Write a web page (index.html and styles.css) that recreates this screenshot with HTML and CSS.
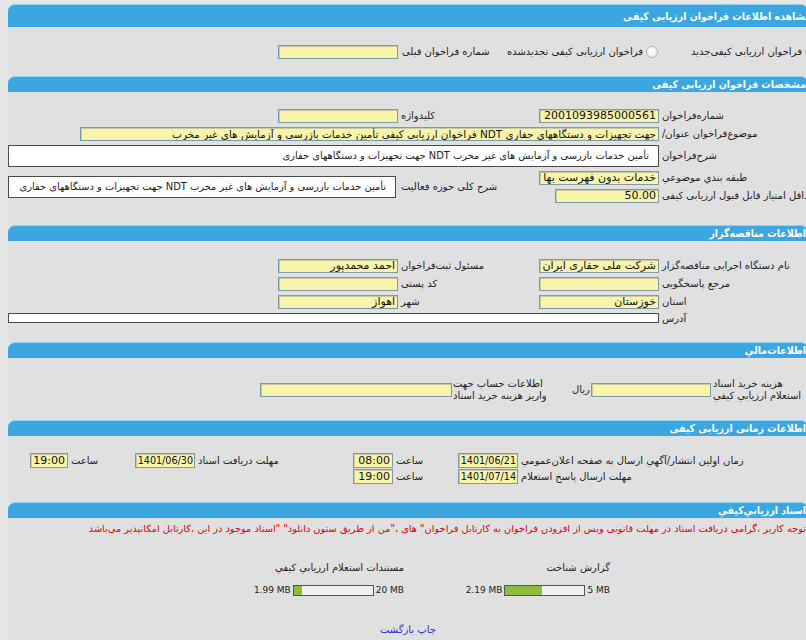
FILE: index.html
```html
<!DOCTYPE html>
<html lang="fa">
<head>
<meta charset="utf-8">
<title>مشاهده اطلاعات فراخوان ارزيابی کيفی</title>
<link rel="stylesheet" href="styles.css">
</head>
<body>
<div class="page">

  <div class="bar tall">مشاهده اطلاعات فراخوان ارزيابی کيفی</div>
  <div class="panel p1">
    <div class="row1">
      <span class="inp w120"></span>
      <span class="lbl l-prev">شماره فراخوان قبلی</span>
      <span class="rgroup g1"><span class="lbl">فراخوان ارزیابی کیفی تجدیدشده</span><span class="radio"></span></span>
      <span class="rgroup g2"><span class="lbl">فراخوان ارزیابی کیفی‌جدید</span><span class="radio"></span></span>
    </div>
  </div>

  <div class="bar">مشخصات فراخوان ارزيابی کيفی</div>
  <div class="panel p2">
    <div class="grid g-spec">
      <span class="inp c2 r1"></span>
      <span class="lbl c3 r1 pl">کلیدواژه</span>
      <span class="inp c4 r1 num">2001093985000561</span>
      <span class="lbl c5 r1 pl">شماره‌فراخوان</span>

      <span class="inp wide r2">فراخوان ارزیابی کیفی تأمین خدمات بازرسی و آزمایش های غیر مخرب NDT جهت تجهیزات و دستگاههای حفاری</span>
      <span class="lbl c5 r2 pl">موضوع‌فراخوان عنوان/</span>

      <span class="box box-full r3">تأمین خدمات بازرسی و آزمایش های غیر مخرب NDT جهت تجهیزات و دستگاههای حفاری</span>
      <span class="lbl c5 r3 pl">شرح‌فراخوان</span>

      <span class="box box-half">تأمین خدمات بازرسی و آزمایش های غیر مخرب NDT جهت تجهیزات و دستگاههای حفاری</span>
      <span class="lbl c3 r45 pl">شرح کلی حوزه فعالیت</span>
      <span class="inp c4 r4">خدمات بدون فهرست بها</span>
      <span class="lbl c5 r4 pl">طبقه بندي موضوعي</span>

      <span class="inp c4 r5 w104 num">50.00</span>
      <span class="lbl c5 r5 pl ltr">حداقل امتیاز قابل قبول ارزیابی کیفی</span>
    </div>
  </div>

  <div class="bar">اطلاعات مناقصه‌گزار</div>
  <div class="panel p3">
    <div class="grid g-org">
      <span class="inp c2 r1">احمد محمدپور</span>
      <span class="lbl c3 r1 pl">مسئول ثبت‌فراخوان</span>
      <span class="inp c4 r1">شرکت ملی حفاری ایران در</span>
      <span class="lbl c5 r1 pl">نام دستگاه اجرایی مناقصه‌گزار</span>

      <span class="inp c2 r2"></span>
      <span class="lbl c3 r2 pl">کد پستی</span>
      <span class="inp c4 r2"></span>
      <span class="lbl c5 r2 pl">مرجع پاسخگویی</span>

      <span class="inp c2 r3">اهواز</span>
      <span class="lbl c3 r3 pl">شهر</span>
      <span class="inp c4 r3">خوزستان</span>
      <span class="lbl c5 r3 pl">استان</span>

      <span class="box box-addr r4"></span>
      <span class="lbl c5 r4 pl addr">آدرس</span>
    </div>
  </div>

  <div class="bar">اطلاعات‌مالي</div>
  <div class="panel p4">
    <div class="fin">
      <span class="inp w192"></span>
      <span class="lbl two l-acc">اطلاعات حساب جهت<br>واریز هزینه خرید اسناد</span>
      <span class="lbl l-rial">ریال</span>
      <span class="inp w120"></span>
      <span class="lbl two l-fee">هزینه خرید اسناد<br>استعلام ارزیابي کیفي</span>
    </div>
  </div>

  <div class="bar">اطلاعات زمانی ارزيابی کيفی</div>
  <div class="panel p5">
    <div class="grid g-time">
      <span class="inp t-c1 r1 num">19:00</span>
      <span class="lbl t-c2 r1 pl">ساعت</span>
      <span class="inp t-c3 r1 date">1401/06/30</span>
      <span class="lbl t-c4 r1 pl">مهلت دريافت اسناد</span>
      <span class="inp t-c5 r1 num">08:00</span>
      <span class="lbl t-c6 r1 pl">ساعت</span>
      <span class="inp t-c7 r1 date">1401/06/21</span>
      <span class="lbl t-c8 r1 pl">زمان اولين انتشار/آگهي ارسال به صفحه اعلان‌عمومي</span>

      <span class="inp t-c5 r2 num">19:00</span>
      <span class="lbl t-c6 r2 pl">ساعت</span>
      <span class="inp t-c7 r2 date">1401/07/14</span>
      <span class="lbl t-c8 r2 pl">مهلت ارسال پاسخ استعلام</span>
    </div>
  </div>

  <div class="bar">اسناد ارزيابي‌کيفي</div>
  <div class="panel p6">
    <p class="notice">توجه کاربر ،گرامی دریافت اسناد در مهلت قانونی وپس از افزودن فراخوان به کارتابل فراخوان" های ،"من از طریق ستون دانلود" "اسناد موجود در این ،کارتابل امکانپذیر می‌باشد</p>
    <div class="docs">
      <div class="doc">
        <div class="doc-title">مستندات استعلام ارزيابي کيفي</div>
        <div class="meter">
          <span class="mb">1.99 MB</span>
          <span class="track"><span class="fill" style="width:10%"></span></span>
          <span class="mb">20 MB</span>
        </div>
      </div>
      <div class="doc">
        <div class="doc-title">گزارش شناخت</div>
        <div class="meter">
          <span class="mb">2.19 MB</span>
          <span class="track"><span class="fill" style="width:46%"></span></span>
          <span class="mb">5 MB</span>
        </div>
      </div>
    </div>
    <div class="links"><a href="#">چاپ</a> <a href="#">بازگشت</a></div>
  </div>

</div>
</body>
</html>
```

FILE: styles.css
```css
html, body {
  margin: 0;
  padding: 0;
}
html {
  overflow: hidden;
  background: #e7e7e7;
}
body {
  width: 806px;
  height: 640px;
  overflow: hidden;
  font-family: "DejaVu Sans", sans-serif;
  font-size: 10px;
  color: #222;
}
.page {
  margin: 4px 0 0 8px;
  width: 800px;
}

/* section header bars */
.bar {
  background: #3ba6df;
  border-top: 1px solid #8fd1f1;
  border-radius: 7px 7px 0 0;
  color: #fff;
  font-family: "DejaVu Sans Condensed", "DejaVu Sans", sans-serif;
  font-weight: bold;
  font-size: 10.5px;
  direction: rtl;
  text-align: right;
  white-space: nowrap;
  overflow: hidden;
  height: 15px;
  line-height: 15px;
  padding-right: 2px;
}
.bar.tall {
  height: 22px;
  line-height: 22px;
  text-indent: -5px;
}

.panel {
  background: #e0e0e0;
  box-sizing: border-box;
}
.p1 { height: 49px; padding-top: 18px; }
.p2 { height: 133px; padding-top: 17px; }
.p3 { height: 101px; padding-top: 18px; }
.p4 { height: 62px; padding-top: 20px; }
.p5 { height: 66px; padding-top: 17px; }
.p6 { height: 130px; padding-top: 4px; }

/* generic pieces */
.lbl {
  direction: rtl;
  text-align: left;
  white-space: pre;
  line-height: 14px;
}
.lbl.ltr { direction: ltr; }
.pl { padding-left: 3px; }

.inp {
  box-sizing: border-box;
  display: block;
  height: 14px;
  background: #f8f4aa;
  border: 1px solid #7d98a6;
  box-shadow: inset 1px 1px 0 #c9c9a0;
  direction: rtl;
  text-align: right;
  font-size: 11px;
  line-height: 12px;
  padding: 0 2px;
  white-space: nowrap;
  overflow: hidden;
  color: #111;
  flex: none;
}
.w120 { width: 120px; }
.w192 { width: 192px; }

.box {
  box-sizing: border-box;
  display: block;
  background: #fff;
  border: 1px solid #4a4a4a;
  direction: rtl;
  text-align: right;
  white-space: pre;
  overflow: hidden;
  font-size: 9.9px;
  padding-right: 9px;
}

/* section 1 */
.row1 {
  display: flex;
  align-items: center;
  height: 14px;
}
.row1 .inp { margin-left: 270px; }
.l-prev {
  width: 104px;
  padding-left: 4px;
  flex: none;
}
.rgroup {
  display: flex;
  align-items: center;
  gap: 3px;
  flex: none;
}
.g1 {
  width: 152px;
  justify-content: flex-end;
}
.g2 {
  padding-left: 33px;
}
.radio {
  box-sizing: border-box;
  width: 12px;
  height: 12px;
  border-radius: 50%;
  border: 1px solid #b4b4b4;
  background: radial-gradient(circle at 40% 35%, #ffffff, #e6e6e6);
  flex: none;
}

/* grids for the specs / organizer sections */
.grid {
  display: grid;
  align-items: center;
}
.g-spec, .g-org {
  grid-template-columns: 270px 120px 141px 120px 1fr;
  row-gap: 4px;
}
.g-spec { grid-template-rows: 14px 14px 22px 14px 14px; }
.g-org { grid-template-rows: 14px 14px 14px 12px; }

.c2 { grid-column: 2; }
.c3 { grid-column: 3; }
.c4 { grid-column: 4; }
.c5 { grid-column: 5; }
.r1 { grid-row: 1; }
.r2 { grid-row: 2; }
.r3 { grid-row: 3; }
.r4 { grid-row: 4; }
.r5 { grid-row: 5; }
.r45 { grid-row: 4 / 6; }

.wide {
  grid-column: 1 / 5;
  margin-left: 72px;
  direction: ltr;
  text-align: right;
  font-size: 10.4px;
}
.box-full {
  grid-column: 1 / 5;
  height: 22px;
  line-height: 20px;
}
.box-half {
  grid-column: 1 / 3;
  grid-row: 4 / 6;
  height: 22px;
  line-height: 20px;
  margin-right: 2px;
}
.w104 {
  width: 104px;
  justify-self: end;
}
.box-addr {
  grid-column: 1 / 5;
  height: 10px;
  align-self: start;
}
.addr { align-self: end; line-height: 12px; }

/* finance */
.fin {
  display: flex;
  align-items: center;
  height: 24px;
}
.fin .w192 { margin-left: 252px; }
.two { line-height: 12px; }
.l-acc {
  width: 119px;
  padding-left: 1px;
}
.l-rial { width: 19px; }
.l-fee { padding-left: 2px; }

/* time */
.g-time {
  grid-template-columns: 22px 38px 67px 60px 158px 40px 65px 60px 1fr;
  grid-template-rows: 15px 15px;
  row-gap: 1px;
}
.g-time .inp { height: 15px; line-height: 13px; padding: 0 2px; }
.g-time .inp.date { font-size: 9.6px; padding: 0 1px; }
.t-c1 { grid-column: 2; }
.t-c2 { grid-column: 3; }
.t-c3 { grid-column: 4; }
.t-c4 { grid-column: 5; }
.t-c5 { grid-column: 6; }
.t-c6 { grid-column: 7; }
.t-c7 { grid-column: 8; }
.t-c8 { grid-column: 9; }

/* documents */
.notice {
  margin: 0;
  direction: rtl;
  text-align: right;
  white-space: nowrap;
  color: #e00000;
  font-size: 9.8px;
  line-height: 14px;
  padding-right: 2px;
}
.docs {
  display: flex;
  margin-top: 25px;
  padding-left: 250px;
  gap: 60px;
}
.doc {
  width: 146px;
}
.doc-title {
  direction: rtl;
  text-align: right;
  white-space: pre;
  line-height: 14px;
}
.meter {
  display: flex;
  justify-content: flex-end;
  align-items: center;
  gap: 1px;
  margin-top: 8px;
  font-size: 9px;
  white-space: nowrap;
  height: 14px;
}
.track {
  box-sizing: border-box;
  width: 81px;
  height: 11px;
  border: 1px solid #555;
  background: #f1f1f1;
  display: flex;
  flex: none;
  margin: 0 1px;
}
.fill {
  display: block;
  height: 100%;
  background: #8dbd3a;
}
.links {
  text-align: center;
  direction: rtl;
  margin-top: 26px;
  white-space: pre;
  line-height: 14px;
}
.links a {
  color: #2b2bd0;
  text-decoration: none;
}
```
